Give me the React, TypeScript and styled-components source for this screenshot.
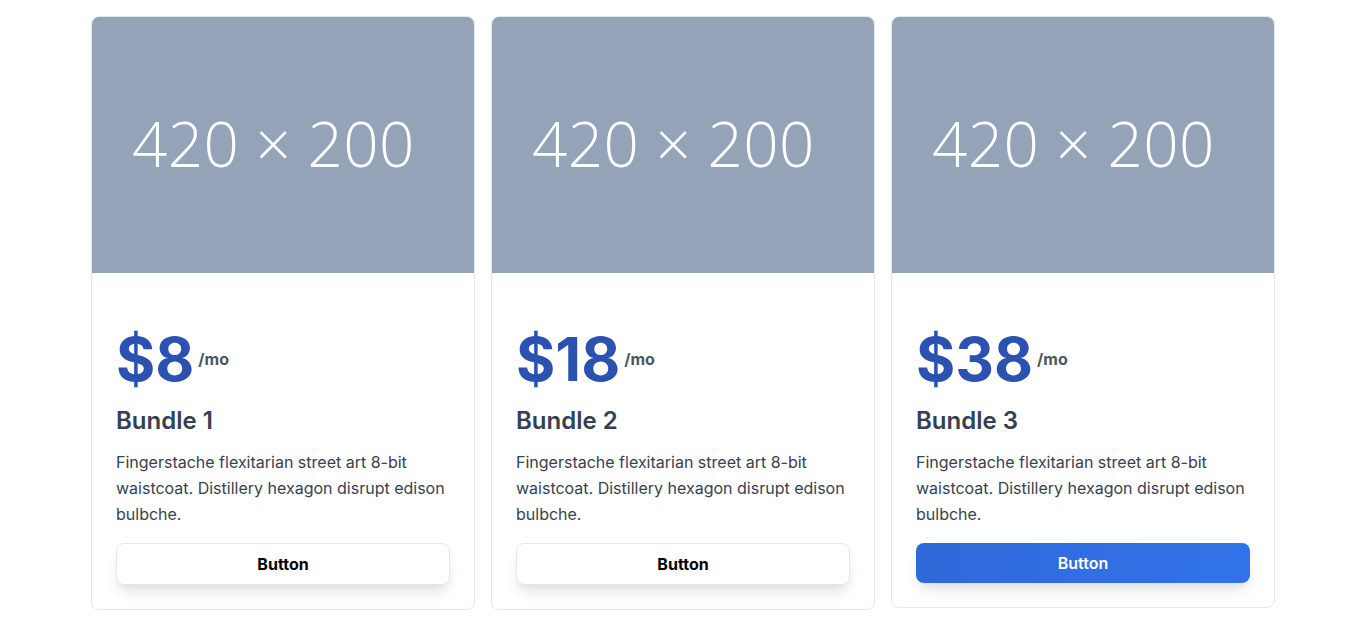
import React from "react";
import styled, { createGlobalStyle } from "styled-components";

const Global = createGlobalStyle`
  * { box-sizing: border-box; }
  body {
    margin: 0;
    background: #ffffff;
    font-family: Inter, "Noto Sans", sans-serif;
  }
`;

const Section = styled.section`
  width: 1200px;
  margin: 0 auto;
  padding-top: 8px;
  display: flex;
`;

const Column = styled.div`
  width: 400px;
  padding: 8px;
`;

const Card = styled.div`
  border: 1px solid #e5e7eb;
  border-radius: 8px;
  overflow: hidden;
  background: #ffffff;
`;

const Placeholder = styled.div`
  height: 256px;
  background: #94a3b8;
  display: flex;
  align-items: center;
  padding-left: 40px;
  padding-bottom: 4px;
  color: #ffffff;
  font-family: "Open Sans", sans-serif;
  font-weight: 300;
  font-size: 62px;
  letter-spacing: 0.3px;
`;

const Body = styled.div`
  padding: 56px 24px 24px;
  display: flex;
  flex-direction: column;
`;

const PriceRow = styled.div`
  display: flex;
  align-items: center;
  color: #2b52b1;
`;

const Amount = styled.span`
  font-size: 60px;
  line-height: 1;
  font-weight: 700;
`;

const Per = styled.span`
  margin-left: 4px;
  font-size: 16px;
  font-weight: 700;
  color: #4b5563;
`;

const Title = styled.h2`
  margin: 16px 0 0;
  font-size: 24px;
  line-height: 32px;
  font-weight: 600;
  color: #334155;
`;

const Desc = styled.p`
  margin: 12px 0 0;
  font-size: 16px;
  line-height: 26px;
  color: #374151;
`;

const Button = styled.button<{ $primary?: boolean }>`
  margin-top: 16px;
  width: 100%;
  height: ${(p) => (p.$primary ? "40px" : "42px")};
  border-radius: 8px;
  border: ${(p) => (p.$primary ? "none" : "1px solid #e5e7eb")};
  background: ${(p) => (p.$primary ? "linear-gradient(90deg, #2f69da, #3173e8)" : "#ffffff")};
  color: ${(p) => (p.$primary ? "#ffffff" : "#000000")};
  font-family: Inter, sans-serif;
  font-size: 16px;
  font-weight: ${(p) => (p.$primary ? 600 : 700)};
  box-shadow: 0 10px 15px -3px rgba(0, 0, 0, 0.1), 0 4px 6px -2px rgba(0, 0, 0, 0.05);
  cursor: pointer;
`;

const bundles = [
  { price: "$8", name: "Bundle 1" },
  { price: "$18", name: "Bundle 2" },
  { price: "$38", name: "Bundle 3", primary: true },
];

export default function App() {
  return (
    <>
      <Global />
      <Section>
        {bundles.map((b) => (
          <Column key={b.name}>
            <Card>
              <Placeholder>420 × 200</Placeholder>
              <Body>
                <PriceRow>
                  <Amount>{b.price}</Amount>
                  <Per>/mo</Per>
                </PriceRow>
                <Title>{b.name}</Title>
                <Desc>
                  Fingerstache flexitarian street art 8-bit waistcoat. Distillery hexagon disrupt edison bulbche.
                </Desc>
                <Button $primary={b.primary}>Button</Button>
              </Body>
            </Card>
          </Column>
        ))}
      </Section>
    </>
  );
}
